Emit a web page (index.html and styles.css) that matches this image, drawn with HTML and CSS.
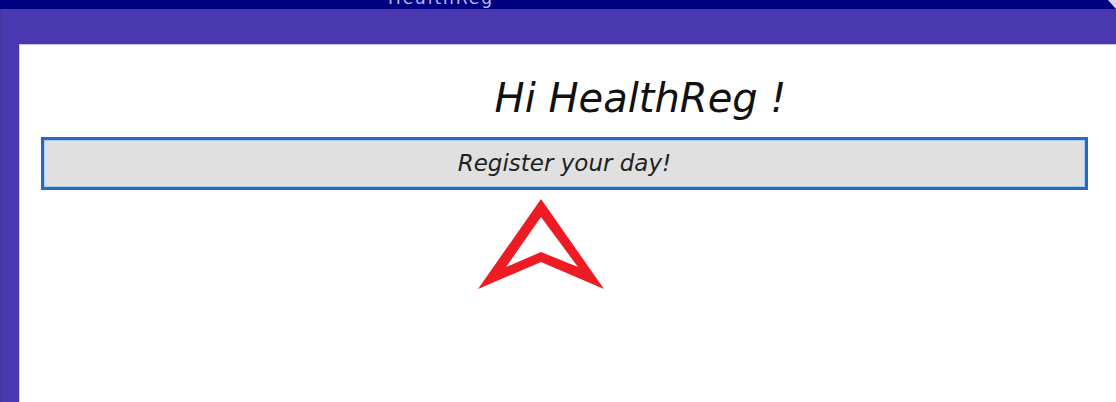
FILE: index.html
```html
<!DOCTYPE html>
<html>
<head>
<meta charset="utf-8">
<link rel="stylesheet" href="styles.css">
</head>
<body>
<div class="titlebar"><span class="title-text">HealthReg</span><span class="corner"></span></div>
<div class="frame">
  <main class="content">
    <h1 class="greeting">Hi HealthReg !</h1>
    <div class="register-box">Register your day!</div>
    <div class="arrow-wrap">
      <svg class="arrow" width="128" height="92" viewBox="476 199 128 92">
        <path fill="#ed1c24" fill-rule="evenodd" d="M540 200 L603 290 L540 263 L477 290 Z M540 218 L505 268 L540 253 L577 268 Z"/>
      </svg>
    </div>
  </main>
</div>
</body>
</html>
```
FILE: styles.css
```css
html, body {
  margin: 0;
  padding: 0;
  height: 100%;
  overflow: hidden;
}
body {
  font-family: "DejaVu Sans", "Liberation Sans", sans-serif;
  background: #4a38b0;
}
.titlebar {
  height: 9px;
  background: #000080;
  position: relative;
  overflow: hidden;
}
.title-text {
  position: absolute;
  left: 388px;
  top: -12px;
  color: #b8b8e8;
  font-size: 17px;
  letter-spacing: 2px;
}
.corner {
  position: absolute;
  right: 0;
  top: 0;
  width: 0;
  height: 0;
  border-top: 9px solid #d8d8f0;
  border-left: 8px solid transparent;
}
.frame {
  height: calc(100% - 9px);
  padding: 35px 0 0 19px;
  box-sizing: border-box;
  background: linear-gradient(90deg, #3f36a0 0, #4a38b0 4px);
  background-color: #4a38b0;
  display: flex;
}
.content {
  flex: 1;
  background: #fff;
  border-left: 1px solid #d6d2f0;
  border-top: 1px solid #c8c0ee;
  padding: 0 28px 0 21px;
  display: flex;
  flex-direction: column;
}
.greeting {
  margin: 31px 0 0 0;
  padding-left: 152px;
  text-align: center;
  font-weight: normal;
  font-style: italic;
  font-size: 40px;
  line-height: 44px;
  color: #111;
}
.register-box {
  margin-top: 17px;
  height: 47px;
  border: 3px solid #2a67c4;
  box-shadow: inset 0 0 0 1px #a9cdf0;
  background: #e0e0e0;
  font-style: italic;
  font-size: 23px;
  line-height: 47px;
  text-align: center;
  color: #222;
}
.arrow-wrap {
  padding-left: 436px;
  margin-top: 8px;
}
.arrow {
  display: block;
}
```
